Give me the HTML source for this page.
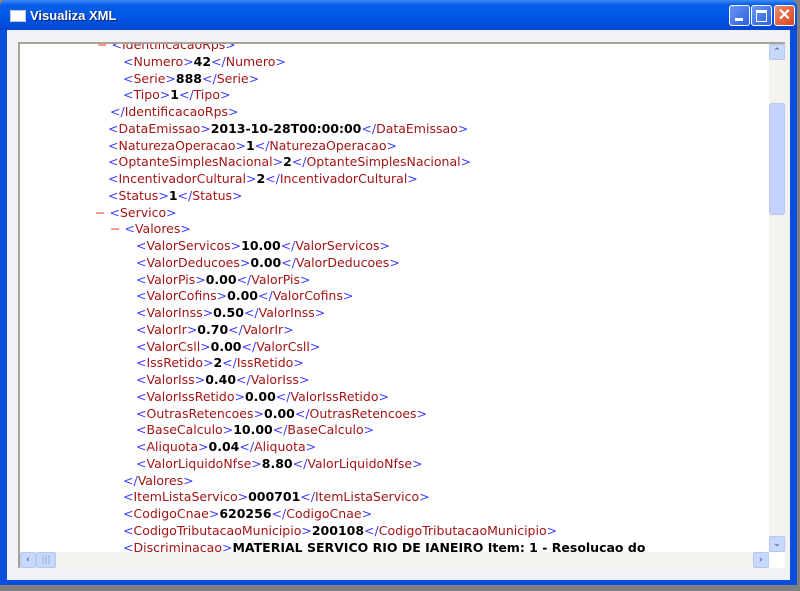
<!DOCTYPE html>
<html><head><meta charset="utf-8"><style>
body{margin:0;width:800px;height:591px;background:#808080;position:relative;overflow:hidden;font-family:"DejaVu Sans","Liberation Sans",sans-serif}
#win{position:absolute;left:0;top:0;width:797px;height:585px;background:#0a4fdc;border-radius:7px 7px 0 0}
#title{position:absolute;left:0;top:0;width:797px;height:30px;border-radius:7px 7px 0 0;background:linear-gradient(#3d8cf5 0%,#0a5fe8 15%,#0055e5 60%,#0246d0 100%)}
#title .t{position:absolute;left:30px;top:8px;color:#fff;font:bold 13px "Liberation Sans",sans-serif;text-shadow:1px 1px #0a1e6e}
#ico{position:absolute;left:10px;top:10px;width:14px;height:10px;background:#fff;border:1px solid #bcd}
.btn{position:absolute;top:5px;width:19px;height:19px;border:1px solid #fff;border-radius:3px;background:linear-gradient(135deg,#6d97f7,#2a5fe0)}
#cl{background:linear-gradient(135deg,#f08a6a,#d8431c)}
#client{position:absolute;left:7px;top:30px;width:783px;height:550px;background:#f1f1f7}
#box{position:absolute;left:18px;top:42px;width:767px;height:526px;border-top:2px solid #a8a597;border-left:2px solid #a8a597;box-sizing:border-box;background:#fff;overflow:hidden}
#txt{position:absolute;left:-20px;top:-7px;font-size:12.5px;line-height:16.75px;white-space:nowrap}
.l{height:16.75px}
.b{color:#3a3aff}.n{color:#a31515}.v{color:#000;font-weight:bold}.m{color:#ff3030}
#vs{position:absolute;left:769px;top:44px;width:16px;height:508px;background:#f4f3ee}
#hs{position:absolute;left:20px;top:552px;width:749px;height:16px;background:#f4f3ee}
.sb{position:absolute;width:14px;height:14px;border:1px solid #b5c8f4;border-radius:2px;background:#c8d8fb;font-size:9px;color:#4d6185;text-align:center;line-height:14px;font-weight:bold}
</style></head><body>
<div id="win">
<div id="title"><div id="ico"></div><div class="t">Visualiza XML</div>
<div class="btn" style="left:729px"><div style="position:absolute;left:5px;top:12px;width:8px;height:3px;background:#fff"></div></div>
<div class="btn" style="left:751px"><div style="position:absolute;left:4px;top:4px;width:9px;height:8px;border:1px solid #fff;border-top-width:3px"></div></div>
<div class="btn" id="cl" style="left:774px;color:#fff;font:bold 16px 'Liberation Sans';text-align:center;line-height:19px">✕</div>
</div>
<div id="client"></div>
</div>
<div id="box"><div id="txt"><div class="l" style="padding-left:97px"><span class="m">−</span> <span class="b">&lt;</span><span class="n">IdentificacaoRps</span><span class="b">&gt;</span></div><div class="l" style="padding-left:123px"><span class="b">&lt;</span><span class="n">Numero</span><span class="b">&gt;</span><span class="v">42</span><span class="b">&lt;/</span><span class="n">Numero</span><span class="b">&gt;</span></div><div class="l" style="padding-left:123px"><span class="b">&lt;</span><span class="n">Serie</span><span class="b">&gt;</span><span class="v">888</span><span class="b">&lt;/</span><span class="n">Serie</span><span class="b">&gt;</span></div><div class="l" style="padding-left:123px"><span class="b">&lt;</span><span class="n">Tipo</span><span class="b">&gt;</span><span class="v">1</span><span class="b">&lt;/</span><span class="n">Tipo</span><span class="b">&gt;</span></div><div class="l" style="padding-left:110px"><span class="b">&lt;/</span><span class="n">IdentificacaoRps</span><span class="b">&gt;</span></div><div class="l" style="padding-left:108px"><span class="b">&lt;</span><span class="n">DataEmissao</span><span class="b">&gt;</span><span class="v">2013-10-28T00:00:00</span><span class="b">&lt;/</span><span class="n">DataEmissao</span><span class="b">&gt;</span></div><div class="l" style="padding-left:108px"><span class="b">&lt;</span><span class="n">NaturezaOperacao</span><span class="b">&gt;</span><span class="v">1</span><span class="b">&lt;/</span><span class="n">NaturezaOperacao</span><span class="b">&gt;</span></div><div class="l" style="padding-left:108px"><span class="b">&lt;</span><span class="n">OptanteSimplesNacional</span><span class="b">&gt;</span><span class="v">2</span><span class="b">&lt;/</span><span class="n">OptanteSimplesNacional</span><span class="b">&gt;</span></div><div class="l" style="padding-left:108px"><span class="b">&lt;</span><span class="n">IncentivadorCultural</span><span class="b">&gt;</span><span class="v">2</span><span class="b">&lt;/</span><span class="n">IncentivadorCultural</span><span class="b">&gt;</span></div><div class="l" style="padding-left:108px"><span class="b">&lt;</span><span class="n">Status</span><span class="b">&gt;</span><span class="v">1</span><span class="b">&lt;/</span><span class="n">Status</span><span class="b">&gt;</span></div><div class="l" style="padding-left:95px"><span class="m">−</span> <span class="b">&lt;</span><span class="n">Servico</span><span class="b">&gt;</span></div><div class="l" style="padding-left:110px"><span class="m">−</span> <span class="b">&lt;</span><span class="n">Valores</span><span class="b">&gt;</span></div><div class="l" style="padding-left:136px"><span class="b">&lt;</span><span class="n">ValorServicos</span><span class="b">&gt;</span><span class="v">10.00</span><span class="b">&lt;/</span><span class="n">ValorServicos</span><span class="b">&gt;</span></div><div class="l" style="padding-left:136px"><span class="b">&lt;</span><span class="n">ValorDeducoes</span><span class="b">&gt;</span><span class="v">0.00</span><span class="b">&lt;/</span><span class="n">ValorDeducoes</span><span class="b">&gt;</span></div><div class="l" style="padding-left:136px"><span class="b">&lt;</span><span class="n">ValorPis</span><span class="b">&gt;</span><span class="v">0.00</span><span class="b">&lt;/</span><span class="n">ValorPis</span><span class="b">&gt;</span></div><div class="l" style="padding-left:136px"><span class="b">&lt;</span><span class="n">ValorCofins</span><span class="b">&gt;</span><span class="v">0.00</span><span class="b">&lt;/</span><span class="n">ValorCofins</span><span class="b">&gt;</span></div><div class="l" style="padding-left:136px"><span class="b">&lt;</span><span class="n">ValorInss</span><span class="b">&gt;</span><span class="v">0.50</span><span class="b">&lt;/</span><span class="n">ValorInss</span><span class="b">&gt;</span></div><div class="l" style="padding-left:136px"><span class="b">&lt;</span><span class="n">ValorIr</span><span class="b">&gt;</span><span class="v">0.70</span><span class="b">&lt;/</span><span class="n">ValorIr</span><span class="b">&gt;</span></div><div class="l" style="padding-left:136px"><span class="b">&lt;</span><span class="n">ValorCsll</span><span class="b">&gt;</span><span class="v">0.00</span><span class="b">&lt;/</span><span class="n">ValorCsll</span><span class="b">&gt;</span></div><div class="l" style="padding-left:136px"><span class="b">&lt;</span><span class="n">IssRetido</span><span class="b">&gt;</span><span class="v">2</span><span class="b">&lt;/</span><span class="n">IssRetido</span><span class="b">&gt;</span></div><div class="l" style="padding-left:136px"><span class="b">&lt;</span><span class="n">ValorIss</span><span class="b">&gt;</span><span class="v">0.40</span><span class="b">&lt;/</span><span class="n">ValorIss</span><span class="b">&gt;</span></div><div class="l" style="padding-left:136px"><span class="b">&lt;</span><span class="n">ValorIssRetido</span><span class="b">&gt;</span><span class="v">0.00</span><span class="b">&lt;/</span><span class="n">ValorIssRetido</span><span class="b">&gt;</span></div><div class="l" style="padding-left:136px"><span class="b">&lt;</span><span class="n">OutrasRetencoes</span><span class="b">&gt;</span><span class="v">0.00</span><span class="b">&lt;/</span><span class="n">OutrasRetencoes</span><span class="b">&gt;</span></div><div class="l" style="padding-left:136px"><span class="b">&lt;</span><span class="n">BaseCalculo</span><span class="b">&gt;</span><span class="v">10.00</span><span class="b">&lt;/</span><span class="n">BaseCalculo</span><span class="b">&gt;</span></div><div class="l" style="padding-left:136px"><span class="b">&lt;</span><span class="n">Aliquota</span><span class="b">&gt;</span><span class="v">0.04</span><span class="b">&lt;/</span><span class="n">Aliquota</span><span class="b">&gt;</span></div><div class="l" style="padding-left:136px"><span class="b">&lt;</span><span class="n">ValorLiquidoNfse</span><span class="b">&gt;</span><span class="v">8.80</span><span class="b">&lt;/</span><span class="n">ValorLiquidoNfse</span><span class="b">&gt;</span></div><div class="l" style="padding-left:123px"><span class="b">&lt;/</span><span class="n">Valores</span><span class="b">&gt;</span></div><div class="l" style="padding-left:123px"><span class="b">&lt;</span><span class="n">ItemListaServico</span><span class="b">&gt;</span><span class="v">000701</span><span class="b">&lt;/</span><span class="n">ItemListaServico</span><span class="b">&gt;</span></div><div class="l" style="padding-left:123px"><span class="b">&lt;</span><span class="n">CodigoCnae</span><span class="b">&gt;</span><span class="v">620256</span><span class="b">&lt;/</span><span class="n">CodigoCnae</span><span class="b">&gt;</span></div><div class="l" style="padding-left:123px"><span class="b">&lt;</span><span class="n">CodigoTributacaoMunicipio</span><span class="b">&gt;</span><span class="v">200108</span><span class="b">&lt;/</span><span class="n">CodigoTributacaoMunicipio</span><span class="b">&gt;</span></div><div class="l" style="padding-left:123px"><span class="b">&lt;</span><span class="n">Discriminacao</span><span class="b">&gt;</span><span class="v">MATERIAL SERVICO RIO DE JANEIRO Item: 1 - Resolucao do</span></div></div></div>
<div id="vs">
<div class="sb" style="left:0;top:0">⌃</div>
<div class="sb" style="left:0;top:59px;height:110px;border-radius:3px;background:#c3d3fd"></div>
<div class="sb" style="left:0;top:492px">⌄</div>
</div>
<div id="hs">
<div class="sb" style="left:0;top:0">‹</div>
<div class="sb" style="left:16px;top:0;width:18px;font-weight:normal;color:#8fa6d8">|||</div>
<div class="sb" style="left:733px;top:0">›</div>
</div>
</body></html>
